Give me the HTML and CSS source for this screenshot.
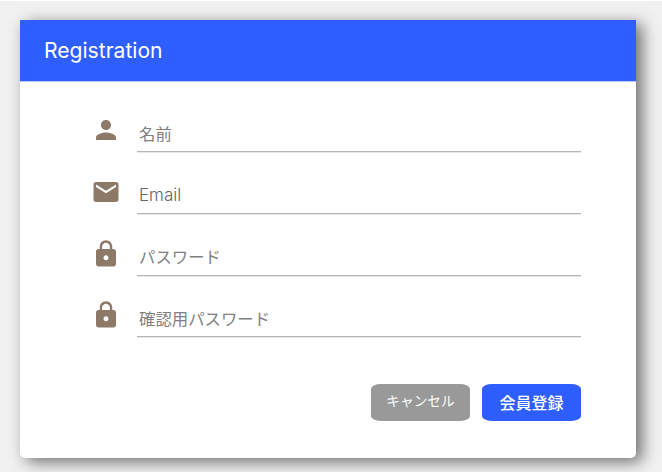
FILE: index.html
```html
<!DOCTYPE html>
<html lang="ja">
<head>
<meta charset="UTF-8">
<title>Registration</title>
<link rel="stylesheet" href="styles.css">
</head>
<body>
<form class="card">
  <h1 class="card-header">Registration</h1>
  <div class="fields">
    <label class="field">
      <svg class="icon" viewBox="0 0 24 24"><path d="M12 12c2.21 0 4-1.79 4-4s-1.79-4-4-4-4 1.79-4 4 1.79 4 4 4zm0 2c-2.67 0-8 1.34-8 4v2h16v-2c0-2.66-5.33-4-8-4z"/></svg>
      <input class="input" type="text" placeholder="名前">
    </label>
    <label class="field">
      <svg class="icon" viewBox="0 0 24 24"><path d="M20 4H4c-1.1 0-1.99.9-1.99 2L2 18c0 1.1.9 2 2 2h16c1.1 0 2-.9 2-2V6c0-1.1-.9-2-2-2zm0 4l-8 5-8-5V6l8 5 8-5v2z"/></svg>
      <input class="input latin" type="email" placeholder="Email">
    </label>
    <label class="field">
      <svg class="icon" viewBox="0 0 24 24"><path d="M18 8h-1V6c0-2.76-2.24-5-5-5S7 3.24 7 6v2H6c-1.1 0-2 .9-2 2v10c0 1.1.9 2 2 2h12c1.1 0 2-.9 2-2V10c0-1.1-.9-2-2-2zm-6 9c-1.1 0-2-.9-2-2s.9-2 2-2 2 .9 2 2-.9 2-2 2zm3.1-9H8.9V6c0-1.71 1.39-3.1 3.1-3.1s3.1 1.39 3.1 3.1v2z"/></svg>
      <input class="input" type="password" placeholder="パスワード">
    </label>
    <label class="field">
      <svg class="icon" viewBox="0 0 24 24"><path d="M18 8h-1V6c0-2.76-2.24-5-5-5S7 3.24 7 6v2H6c-1.1 0-2 .9-2 2v10c0 1.1.9 2 2 2h12c1.1 0 2-.9 2-2V10c0-1.1-.9-2-2-2zm-6 9c-1.1 0-2-.9-2-2s.9-2 2-2 2 .9 2 2-.9 2-2 2zm3.1-9H8.9V6c0-1.71 1.39-3.1 3.1-3.1s3.1 1.39 3.1 3.1v2z"/></svg>
      <input class="input" type="password" placeholder="確認用パスワード">
    </label>
  </div>
  <div class="actions">
    <button class="btn cancel" type="button">キャンセル</button>
    <button class="btn submit" type="button">会員登録</button>
  </div>
</form>
</body>
</html>
```
FILE: styles.css
```css
* {
  box-sizing: border-box;
}

body {
  margin: 0;
  height: 472px;
  padding: 19px 0 0 20px;
  overflow: hidden;
  background: #f1f1f1;
  border-top: 1px solid #fff;
  font-family: "Noto Sans CJK JP", sans-serif;
}

.card {
  width: 616px;
  height: 438px;
  background: #fff;
  border-radius: 0 0 5px 5px;
  box-shadow: 6px 4px 16px rgba(0, 0, 0, 0.55);
}

.card-header {
  height: 62px;
  margin: 0;
  padding-left: 24px;
  background: #2f5eff;
  border-bottom: 1px solid #bccaff;
  color: #fff;
  font: 400 21.1px/61px Inter, "Liberation Sans", sans-serif;
}

.fields {
  padding: 27px 55px 0 71px;
}

.field {
  display: flex;
  align-items: flex-start;
  gap: 16px;
  height: 61.8px;
  padding-top: 6px;
}

.icon {
  width: 30px;
  height: 30px;
  flex: none;
  fill: #8d7968;
}

.input {
  flex: 1;
  min-width: 0;
  height: 38px;
  padding: 0 2px 3px;
  border: 0;
  outline: 0;
  background: linear-gradient(#b5b5b5 50%, #e8e8e8 50%) bottom / 100% 2px no-repeat;
  font: 400 16.4px/24px "Noto Sans CJK JP", sans-serif;
}

.latin {
  padding-bottom: 1px;
  font: 300 17px/24px Inter, "Liberation Sans", sans-serif;
}

.input::placeholder {
  color: #808080;
  opacity: 1;
}

.latin::placeholder {
  color: #666;
}

.actions {
  display: flex;
  gap: 12px;
  justify-content: flex-end;
  padding: 28px 55px 0 0;
}

.btn {
  width: 99px;
  height: 37px;
  padding: 0;
  border: 0;
  border-radius: 10px / 5px;
  color: #fff;
  font: 400 16px/37px "Noto Sans CJK JP", sans-serif;
}

.cancel {
  background: #999;
  font-size: 13.7px;
  line-height: 32px;
  padding-bottom: 5px;
}

.submit {
  background: #2f5eff;
  font-weight: 500;
  padding-bottom: 1px;
}
```
